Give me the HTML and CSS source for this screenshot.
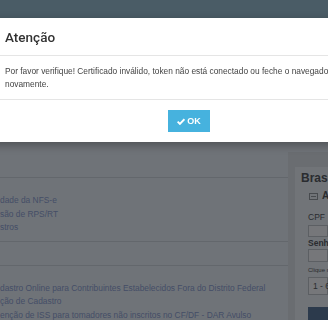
FILE: index.html
```html
<!DOCTYPE html>
<html lang="pt-BR">
<head>
    <meta charset="UTF-8" />
    <title>NFS-e - Atenção</title>
    <link rel="stylesheet" href="styles.css">
</head>
<body>

<div class="page">
    <header class="topbar"></header>

    <div class="main">
        <section class="content">
            <div class="intro"></div>
            <ul class="links first">
                <li><a href="#">dade da NFS-e</a></li>
                <li><a href="#">são de RPS/RT</a></li>
                <li><a href="#">stros</a></li>
            </ul>
            <div class="spacer"></div>
            <ul class="links">
                <li><a href="#">dastro Online para Contribuintes Estabelecidos Fora do Distrito Federal</a></li>
                <li><a href="#">ção de Cadastro</a></li>
                <li><a href="#">enção de ISS para tomadores não inscritos no CF/DF - DAR Avulso</a></li>
            </ul>
        </section>

        <aside class="sidebar">
            <div class="login">
                <h2>Brasília</h2>
                <div class="tab">
                    <svg class="tab-icon" width="9" height="7" viewBox="0 0 9 7">
                        <rect x="0.5" y="0.5" width="8" height="6" fill="none" stroke="#8e949c" />
                        <line x1="2" y1="3.5" x2="7" y2="3.5" stroke="#8e949c" />
                    </svg>
                    <span>Acesso</span>
                </div>
                <div class="fields">
                    <label class="lbl">CPF</label>
                    <div class="input"></div>
                    <label class="lbl strong">Senha</label>
                    <div class="input tall"></div>
                    <div class="hint">Clique no código</div>
                    <div class="select">1 - 6</div>
                    <div class="enter"></div>
                </div>
            </div>
        </aside>
    </div>
</div>

<div class="backdrop"></div>

<div class="modal">
    <div class="modal-header">
        <h4>Atenção</h4>
    </div>
    <div class="modal-body">
        Por favor verifique! Certificado inválido, token não está conectado ou feche o navegador e abra novamente.
    </div>
    <div class="modal-footer">
        <button type="button" class="btn-ok">
            <svg width="8" height="7" viewBox="0 0 8 7">
                <path d="M0.6 3.6 L2.9 5.9 L7.4 1.2" fill="none" stroke="#fff" stroke-width="1.9" />
            </svg>
            OK
        </button>
    </div>
</div>

</body>
</html>
```

FILE: styles.css
```css
html, body {
    margin: 0;
    height: 320px;
    overflow: hidden;
}
body {
    font-family: "Liberation Sans", Arial, sans-serif;
    background-color: #dfe7f1;
    color: #333;
}
.page {
    width: 328px;
    height: 320px;
}
.topbar {
    height: 18px;
    background-color: #94b8cc;
}
.main {
    display: flex;
}
.content {
    width: 288px;
    flex-shrink: 0;
}
.intro {
    height: 159px;
    border-bottom: 1px solid #c6ced8;
}
.links {
    list-style: none;
    margin: 0;
    padding: 16px 0 0;
    font-size: 8.4px;
    line-height: 13.5px;
}
.links.first {
    padding-bottom: 6px;
    border-bottom: 1px solid #c6ced8;
}
.links a {
    color: #8a9cce;
    text-decoration: none;
}
.spacer {
    height: 23px;
    border-bottom: 1px solid #c6ced8;
}
.sidebar {
    flex: 1;
    margin-top: 134px;
    padding: 15px 0 0 7px;
    background-color: #d4dae2;
    white-space: nowrap;
    overflow: hidden;
}
.login {
    background-color: #e2e8f0;
    padding: 4px 0 0 6px;
    height: 200px;
}
.login h2 {
    margin: 0;
    font-size: 12px;
    line-height: 14px;
    color: #545860;
}
.tab {
    margin-top: 4px;
    padding-left: 8px;
    line-height: 14px;
    font-size: 10px;
    font-weight: bold;
    color: #545860;
    display: flex;
    align-items: center;
    gap: 4px;
}
.tab-icon {
    flex-shrink: 0;
}
.fields {
    padding-left: 7px;
}
.lbl {
    display: block;
    margin-top: 8px;
    font-size: 8.5px;
    line-height: 12px;
    color: #545860;
}
.lbl.strong {
    margin-top: 0;
    font-weight: bold;
}
.input {
    margin-top: 2px;
    height: 10px;
    border: 1px solid #b8bec6;
    background-color: #eceff4;
}
.input.tall {
    margin-top: 0;
    height: 11px;
}
.hint {
    margin-top: 4px;
    font-size: 6px;
    line-height: 8px;
    color: #545860;
}
.select {
    margin-top: 3px;
    height: 16px;
    line-height: 16px;
    padding-left: 4px;
    font-size: 8.5px;
    color: #545860;
    border: 1px solid #b8bec6;
    background-color: #eceff4;
}
.enter {
    margin-top: 12px;
    height: 22px;
    background-color: #587498;
}
.backdrop {
    position: fixed;
    inset: 0;
    background-color: rgba(0, 0, 0, 0.5);
}
.modal {
    position: absolute;
    top: 18px;
    left: -10px;
    width: 398px;
    background-color: #fff;
    box-shadow: 0 3px 9px rgba(0, 0, 0, 0.3);
}
.modal-header {
    height: 37px;
    padding: 0 15px;
    border-bottom: 1px solid #e5e5e5;
    display: flex;
    align-items: center;
}
.modal-header h4 {
    margin: 0;
    font-family: Roboto, "Liberation Sans", sans-serif;
    font-weight: 500;
    font-size: 13.5px;
    color: #333;
}
.modal-body {
    padding: 9px 15px 8px;
    font-size: 8.35px;
    line-height: 13px;
    color: #444;
}
.modal-footer {
    padding: 10px 15px;
    border-top: 1px solid #e5e5e5;
    text-align: center;
}
.btn-ok {
    height: 22px;
    width: 42px;
    padding: 0;
    border: none;
    background-color: #46b2de;
    color: #fff;
    font-family: "Liberation Sans", Arial, sans-serif;
    font-weight: bold;
    font-size: 9px;
    display: inline-flex;
    align-items: center;
    justify-content: center;
    gap: 2px;
}
```
